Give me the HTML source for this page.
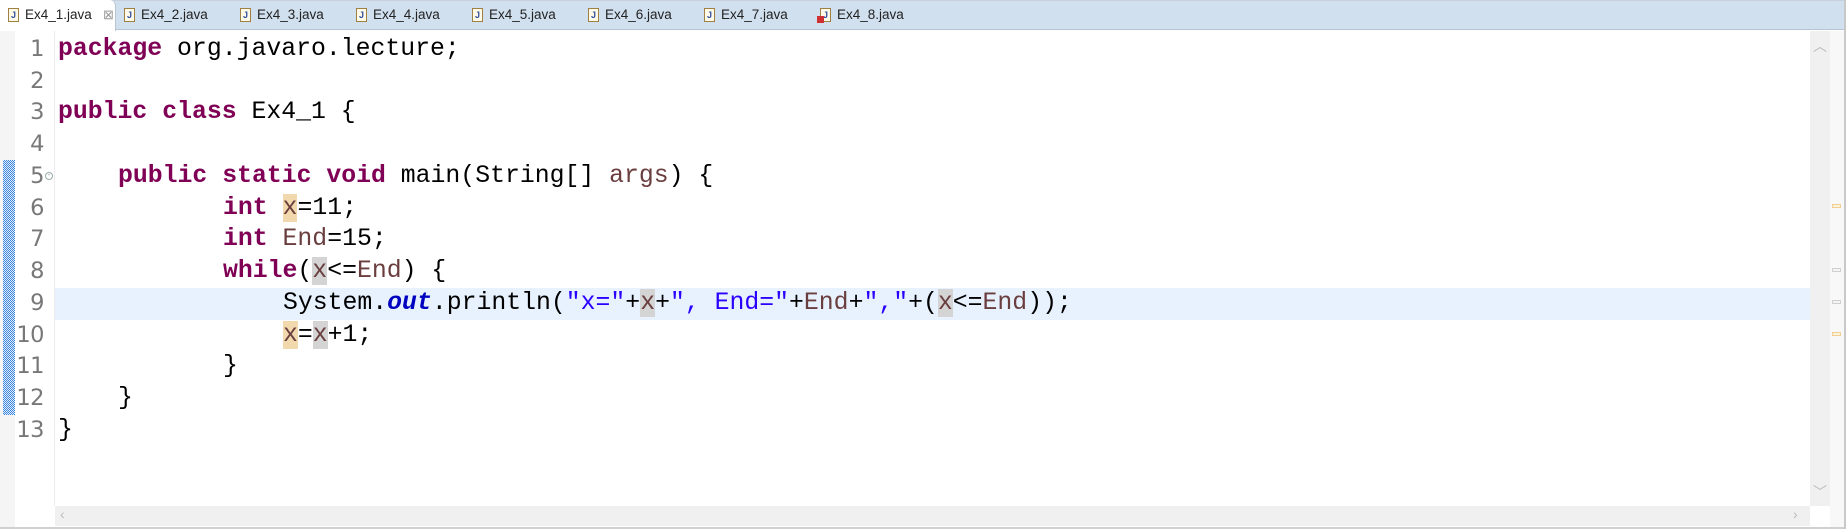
<!DOCTYPE html>
<html><head><meta charset="utf-8"><style>
*{margin:0;padding:0;box-sizing:border-box}
body{width:1846px;height:529px;background:#fff;position:relative;overflow:hidden;font-family:"Liberation Sans",sans-serif}
.bar{position:absolute;left:0;top:0;width:1846px;height:30px;background:#d1e0ee;border-bottom:1px solid #b8c4d4;border-top:1px solid #c8d0dc}
.tab{position:absolute;top:0;height:30px;font-size:13.5px;color:#222;line-height:30px}
.tab .ic{position:absolute;left:0;top:8px;width:11px;height:14px;border:1px solid #a08040;background:#fffbe8;font-size:9px;line-height:12px;text-align:center;color:#3050a0;font-weight:bold}
.tab span.t{position:absolute;left:17px;white-space:nowrap}
.active{position:absolute;left:0;top:0;width:116px;height:31px;background:#fff;border-radius:0 6px 0 0;border-right:1px solid #b8c4d4}
.gut{position:absolute;left:0;top:31px;width:15px;height:496px;background:#f5f5f5}
.chg{position:absolute;left:3px;top:160px;width:12px;height:255px;background:repeating-conic-gradient(#3b86dc 0 25%,#e4eefa 0 50%) 0 0/2px 2px}
.sep{position:absolute;left:54px;top:31px;width:1px;height:475px;background:#ececec}
.ln{position:absolute;left:0;width:44px;text-align:right;font-size:22.5px;color:#787878;line-height:32px;font-family:"DejaVu Sans","Liberation Sans",sans-serif;letter-spacing:-0.5px}
.cl{position:absolute;height:32px;line-height:32px;font-family:"Liberation Mono",monospace;font-size:24.8px;white-space:pre;color:#000}
.k{color:#7f0055;font-weight:bold}
.v{color:#6a3e3e}
.s{color:#2a00ff}
.o{color:#0000c0;font-weight:bold;font-style:italic}
.r{background:#d4d4d4}
.w{background:#f2d9ad}
.hl{position:absolute;left:55px;top:288px;width:1755px;height:32px;background:#e8f2fe}
.vs{position:absolute;left:1810px;top:31px;width:20px;height:475px;background:#f0f0f0}
.ov{position:absolute;left:1830px;top:31px;width:14px;height:496px;background:#f8f8f8}
.hs{position:absolute;left:55px;top:506px;width:1755px;height:20px;background:#f0f0f0}
.mk{position:absolute;left:1832px;width:9px;height:4px;border:1px solid #f0d090;background:#fdf3dc}
.mk.g{border-color:#d0d0d0;background:#f4f4f4}
.bord{position:absolute;left:0;top:527px;width:1846px;height:2px;background:#d0d0d0}
.rb{position:absolute;left:1844px;top:0;width:2px;height:529px;background:#c8c8c8}
.arr{position:absolute;color:#bbb;font-size:14px}
</style></head><body>
<div class="bar"></div>
<div class="active"></div>
<div class="tab" style="left:8px"><div class="ic">J</div><span class="t">Ex4_1.java</span></div>
<div class="tab" style="left:103px;color:#999;font-size:13px">⊠</div>
<div class="tab" style="left:124px"><div class="ic">J</div><span class="t">Ex4_2.java</span></div>
<div class="tab" style="left:240px"><div class="ic">J</div><span class="t">Ex4_3.java</span></div>
<div class="tab" style="left:356px"><div class="ic">J</div><span class="t">Ex4_4.java</span></div>
<div class="tab" style="left:472px"><div class="ic">J</div><span class="t">Ex4_5.java</span></div>
<div class="tab" style="left:588px"><div class="ic">J</div><span class="t">Ex4_6.java</span></div>
<div class="tab" style="left:704px"><div class="ic">J</div><span class="t">Ex4_7.java</span></div>
<div class="tab" style="left:820px"><div class="ic">J</div><div style="position:absolute;left:-3px;top:16px;width:7px;height:7px;background:#d03030"></div><span class="t">Ex4_8.java</span></div>

<div class="gut"></div><div class="chg"></div><div class="sep"></div>
<div class="hl"></div>
<div class="vs"></div><div class="ov"></div><div class="hs"></div>
<div class="arr" style="left:1813px;top:36px">︿</div>
<div class="arr" style="left:1813px;top:482px">﹀</div>
<div class="arr" style="left:60px;top:506px">‹</div>
<div class="arr" style="left:1793px;top:506px">›</div>
<div class="mk" style="top:204px"></div>
<div class="mk g" style="top:268px"></div>
<div class="mk g" style="top:300px"></div>
<div class="mk" style="top:332px"></div>

<div class="ln" style="top:33px">1</div>
<div class="ln" style="top:65px">2</div>
<div class="ln" style="top:96px">3</div>
<div class="ln" style="top:128px">4</div>
<div class="ln" style="top:160px">5</div>
<div style="position:absolute;left:45px;top:172px;width:8px;height:8px;border:1px solid #9aa;border-radius:50%;font-size:7px;line-height:6px;text-align:center;color:#778">-</div>
<div class="ln" style="top:192px">6</div>
<div class="ln" style="top:223px">7</div>
<div class="ln" style="top:255px">8</div>
<div class="ln" style="top:287px">9</div>
<div class="ln" style="top:319px">10</div>
<div class="ln" style="top:350px">11</div>
<div class="ln" style="top:382px">12</div>
<div class="ln" style="top:414px">13</div>

<div class="cl" style="left:58px;top:33px"><span class="k">package</span> org.javaro.lecture;</div>
<div class="cl" style="left:58px;top:96px"><span class="k">public</span> <span class="k">class</span> Ex4_1 {</div>
<div class="cl" style="left:118px;top:160px"><span class="k">public</span> <span class="k">static</span> <span class="k">void</span> main(String[] <span class="v">args</span>) {</div>
<div class="cl" style="left:223px;top:192px"><span class="k">int</span> <span class="v w">x</span>=11;</div>
<div class="cl" style="left:223px;top:223px"><span class="k">int</span> <span class="v">End</span>=15;</div>
<div class="cl" style="left:223px;top:255px"><span class="k">while</span>(<span class="v r">x</span>&lt;=<span class="v">End</span>) {</div>
<div class="cl" style="left:283px;top:287px">System.<span class="o">out</span>.println(<span class="s">"x="</span>+<span class="v r">x</span>+<span class="s">", End="</span>+<span class="v">End</span>+<span class="s">","</span>+(<span class="v r">x</span>&lt;=<span class="v">End</span>));</div>
<div class="cl" style="left:283px;top:319px"><span class="v w">x</span>=<span class="v r">x</span>+1;</div>
<div class="cl" style="left:223px;top:350px">}</div>
<div class="cl" style="left:118px;top:382px">}</div>
<div class="cl" style="left:58px;top:414px">}</div>
<div class="bord"></div><div class="rb"></div>
</body></html>
